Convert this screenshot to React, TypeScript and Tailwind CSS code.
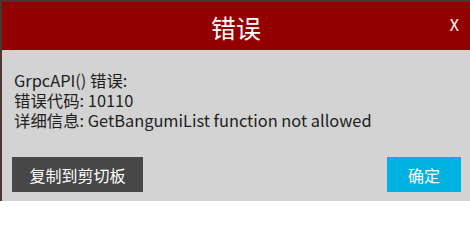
import React from 'react'

const font = { fontFamily: '"Noto Sans CJK SC", "Noto Sans", sans-serif' }

export default function App() {
  const lines = ['GrpcAPI() 错误:', '错误代码: 10110', '详细信息: GetBangumiList function not allowed']

  return (
    <div className="w-[470px] h-[201px] bg-[#4a3530] pt-[2px] pl-[2px] overflow-hidden" style={font}>
      <div className="flex flex-col h-full bg-[#d3d3d3]">
        <div className="relative h-[48px] bg-[#930000] flex items-center justify-center text-white">
          <span className="text-[25px] leading-none mt-[2px]">错误</span>
          <span className="absolute right-[11px] top-[10px] text-[16px]">X</span>
        </div>
        <div className="pt-[20px] pl-[12px] text-[16.4px] leading-[20px] text-[#1e1e1e]">
          {lines.map((l) => (
            <div key={l}>{l}</div>
          ))}
        </div>
        <div className="flex justify-between mt-auto mb-[9px] pl-[10px] pr-[9px]">
          <button className="w-[131px] h-[35px] bg-[#474747] text-white text-[16px]">复制到剪切板</button>
          <button className="w-[74px] h-[35px] bg-[#00b2e2] text-white text-[16px]">确定</button>
        </div>
      </div>
    </div>
  )
}
